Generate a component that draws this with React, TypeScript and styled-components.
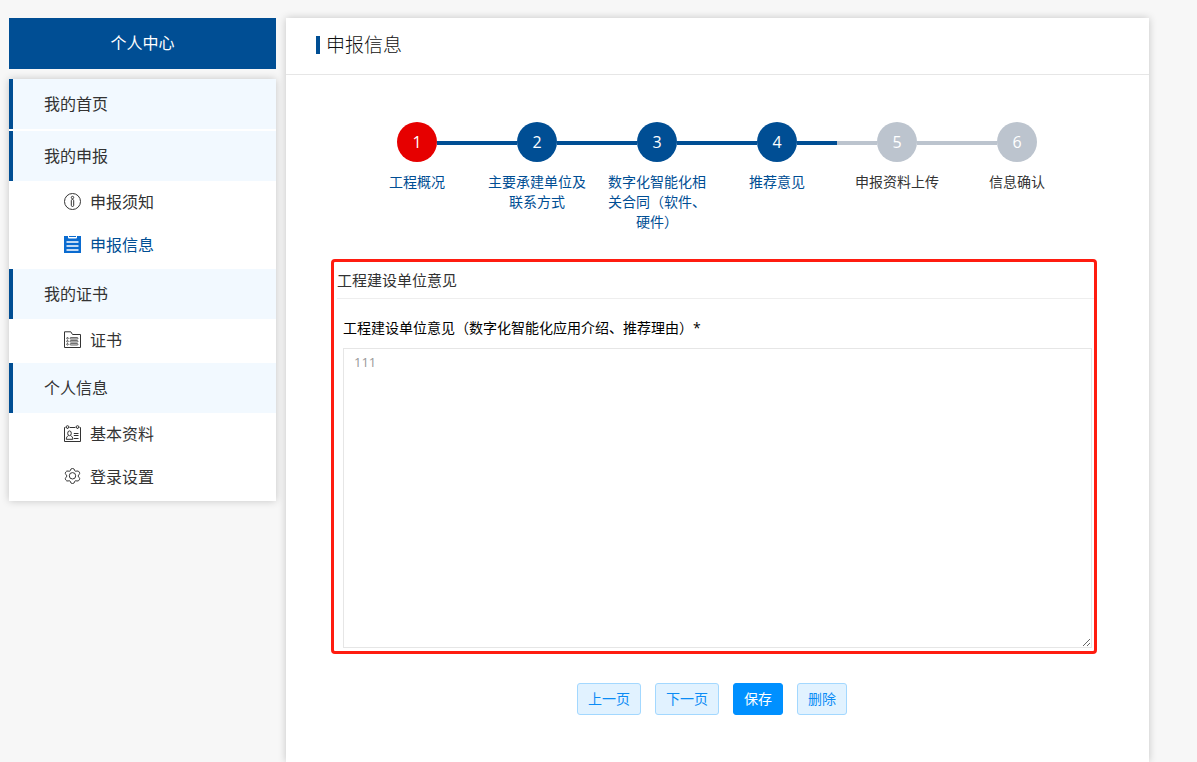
import React from "react";
import styled, { createGlobalStyle, css } from "styled-components";

const GlobalStyle = createGlobalStyle`
  *, *::before, *::after { box-sizing: border-box; }
  body {
    margin: 0;
    background: #f7f7f7;
    color: #333;
    font-family: "Open Sans", "Noto Sans CJK SC", sans-serif;
    font-size: 14px;
    line-height: 20px;
  }
  h1, h2, p, ul, ol { margin: 0; padding: 0; font-weight: inherit; }
  ul, ol { list-style: none; }
  a { color: inherit; text-decoration: none; }
`;

const blue = "#004e94";

const Page = styled.div`
  display: flex;
  align-items: flex-start;
  gap: 10px;
  min-height: 100vh;
  padding: 18px 48px 0 9px;
`;

const Sidebar = styled.aside`
  flex: 0 0 267px;
  display: flex;
  flex-direction: column;
  gap: 10px;
`;

const SidebarTitle = styled.h2`
  background: ${blue};
  color: #fff;
  font-size: 16px;
  line-height: 51px;
  text-align: center;
`;

const Menu = styled.nav`
  background: #fff;
  box-shadow: 0 0 8px rgba(0, 0, 0, 0.2);
`;

const SectionLink = styled.a<{ $spaced?: boolean }>`
  display: block;
  padding-left: 31px;
  border-left: 4px solid ${blue};
  background: #f2f9ff;
  font-size: 16px;
  line-height: 50px;
  margin-bottom: ${(p) => (p.$spaced ? "2px" : "0")};
`;

const SubList = styled.ul<{ $single?: boolean }>`
  display: flex;
  flex-direction: column;
  padding-bottom: ${(p) => (p.$single ? "1px" : "2px")};
`;

const SubLink = styled.a<{ $active?: boolean }>`
  display: flex;
  align-items: center;
  gap: 8px;
  height: 43px;
  padding: 0 0 2px 55px;
  font-size: 16px;
  color: ${(p) => (p.$active ? blue : "#333")};

  svg { flex: none; }
`;

const Main = styled.main`
  flex: 1;
  min-width: 0;
  align-self: stretch;
  background: #fff;
  box-shadow: 0 0 8px rgba(0, 0, 0, 0.2);
`;

const MainHeader = styled.header`
  display: flex;
  align-items: center;
  gap: 6px;
  height: 57px;
  padding: 0 30px 2px;
  border-bottom: 1px solid #e6e6e6;

  &::before {
    content: "";
    width: 4px;
    height: 18px;
    background: ${blue};
  }
`;

const PageTitle = styled.h1`
  color: #111;
  font-size: 19px;
  font-weight: 300;
  line-height: 28px;
`;

const Steps = styled.ol`
  display: flex;
  justify-content: center;
  min-height: 108px;
  margin: 47px 1px 27px 0;
`;

type StepState = "first" | "done" | "current" | "todo";

const grey = "#bcc4ce";

const Step = styled.li<{ $state: StepState }>`
  flex: 0 0 120px;
  display: flex;
  flex-direction: column;
  gap: 10px;
  color: ${(p) => (p.$state === "todo" ? "#333" : blue)};
`;

const StepTrack = styled.div<{ $state: StepState }>`
  display: flex;
  align-items: center;

  &::before, &::after {
    content: "";
    flex: 1;
    height: 4px;
    margin-top: 2px;
    background: ${(p) => (p.$state === "todo" ? grey : blue)};
  }
  ${Step}:first-child &::before,
  ${Step}:last-child &::after { background: none; }
`;

const StepDot = styled.span<{ $state: StepState }>`
  width: 40px;
  border-radius: 50%;
  background: ${(p) =>
    p.$state === "first" ? "#e60000" : p.$state === "todo" ? grey : blue};
  color: #fff;
  font-size: 16px;
  line-height: 40px;
  text-align: center;
`;

const StepLabel = styled.span`
  padding: 0 10px;
  text-align: center;
`;

const Form = styled.form`
  margin: 0 52px 0 45px;
`;

const Section = styled.section`
  padding: 0 0 3px 3px;
  border: 3px solid #ff1c10;
  border-radius: 4px;
`;

const SectionTitle = styled.h2`
  border-bottom: 1px solid #eee;
  font-size: 15px;
  line-height: 36px;
`;

const Field = styled.div`
  display: flex;
  flex-direction: column;
  gap: 10px;
  padding: 19px 2px 0 6px;
`;

const FieldLabel = styled.label`
  color: #000;
`;

const TextArea = styled.textarea`
  display: block;
  width: 100%;
  height: 300px;
  padding: 3px 10px;
  border: 1px solid #e6e6e6;
  border-radius: 0;
  outline: none;
  background: #fff;
  color: #999;
  font: inherit;
  font-size: 13px;
`;

const Actions = styled.div`
  display: flex;
  justify-content: center;
  gap: 14px;
  padding: 29px 4px 47px 0;
`;

const Button = styled.button<{ $primary?: boolean }>`
  height: 32px;
  padding: 0 10px;
  border: 1px solid #a3d8ff;
  border-radius: 3px;
  background: #e1f2ff;
  color: #0b8cf5;
  font: inherit;
  cursor: pointer;
  ${(p) =>
    p.$primary &&
    css`
      border-color: #0090ff;
      background: #0090ff;
      color: #fff;
    `}
`;

const Icon = ({ children }: { children: React.ReactNode }) => (
  <svg
    width="18"
    height="18"
    viewBox="0 0 18 18"
    fill="none"
    stroke="#333"
    strokeWidth="1"
    aria-hidden="true"
  >
    {children}
  </svg>
);

const NoticeIcon = () => (
  <Icon>
    <circle cx="8.5" cy="8.5" r="8" />
    <circle cx="8.5" cy="4.5" r="1.2" />
    <rect x="7.3" y="6.5" width="2.4" height="7" rx="1.2" />
  </Icon>
);

const ClipboardIcon = () => (
  <Icon>
    <path d="M0 0h4v1.500q0 1 1 1h7q1 0 1-1V0h4v17H0z" fill="#0a6bd0" stroke="none" />
    <path d="M5 0h7v1H5z" fill="#0a6bd0" stroke="none" />
    <path d="M2.500 6h12M2.500 10h12M2.500 14h12" stroke="#fff" strokeWidth="1.300" />
  </Icon>
);

const FolderIcon = () => (
  <Icon>
    <path d="M.5 16.500V.8h6.300l1.700 2.700h8v13z" />
    <g strokeWidth=".8">
      <circle cx="3.500" cy="7.300" r=".8" />
      <circle cx="3.500" cy="10.300" r=".8" />
      <circle cx="3.500" cy="13.300" r=".8" />
      <rect x="6" y="6.600" width="8" height="1.400" rx=".7" />
      <rect x="6" y="9.600" width="8" height="1.400" rx=".7" />
      <rect x="6" y="12.600" width="8" height="1.400" rx=".7" />
    </g>
  </Icon>
);

const ProfileIcon = () => (
  <Icon>
    <path d="M1.500 2.500h-1v14h16v-14h-1M5.500 2.500h6" />
    <path d="M2 1.500q1.500-1.600 3 0L3.500 4zM12 1.500q1.500-1.600 3 0L13.500 4z" />
    <ellipse cx="5.500" cy="8.300" rx="1.800" ry="2.400" />
    <path d="M4.500 10.600C3 11.300 2.300 12.500 2.300 14.300h6.500c0-1.800-.7-3-2.200-3.700" />
    <path d="M9.800 8.500h4.700M9.800 10.500h4.700M9.800 13.500h4.700" />
  </Icon>
);

const GearIcon = () => (
  <Icon>
    <path d="M6.500 2Q6.700.5 8.500.5t2 1.500l.3.800q.5.600 1.300.4l.9-.2q1.600-.2 2.300 1.100.9 1.500-.3 2.500l-.5.500q-.5.900 0 1.800l.5.500q1.200 1 .3 2.500-.7 1.300-2.300 1.100l-.9-.2q-.8-.2-1.300.4l-.3.800q-.2 1.500-2 1.500t-2-1.500l-.3-.800q-.5-.6-1.300-.4l-.9.2q-1.600.2-2.300-1.100-.9-1.500.3-2.500l.5-.5q.5-.9 0-1.800L2 6.600Q.8 5.600 1.700 4.100 2.400 2.800 4 3l.9.200q.8.200 1.300-.4z" />
    <circle cx="8.500" cy="7.800" r="3.200" />
  </Icon>
);

const steps: { label: string; state: StepState }[] = [
  { label: "工程概况", state: "first" },
  { label: "主要承建单位及联系方式", state: "done" },
  { label: "数字化智能化相关合同（软件、硬件）", state: "done" },
  { label: "推荐意见", state: "current" },
  { label: "申报资料上传", state: "todo" },
  { label: "信息确认", state: "todo" },
];

export default function App() {
  return (
    <>
      <GlobalStyle />
      <Page>
        <Sidebar>
          <SidebarTitle>个人中心</SidebarTitle>
          <Menu>
            <SectionLink href="#home" $spaced>我的首页</SectionLink>
            <SectionLink href="#declare">我的申报</SectionLink>
            <SubList>
              <li><SubLink href="#notice"><NoticeIcon />申报须知</SubLink></li>
              <li><SubLink href="#info" $active><ClipboardIcon />申报信息</SubLink></li>
            </SubList>
            <SectionLink href="#certificates">我的证书</SectionLink>
            <SubList $single>
              <li><SubLink href="#certificate"><FolderIcon />证书</SubLink></li>
            </SubList>
            <SectionLink href="#personal">个人信息</SectionLink>
            <SubList>
              <li><SubLink href="#profile"><ProfileIcon />基本资料</SubLink></li>
              <li><SubLink href="#login"><GearIcon />登录设置</SubLink></li>
            </SubList>
          </Menu>
        </Sidebar>
        <Main>
          <MainHeader>
            <PageTitle>申报信息</PageTitle>
          </MainHeader>
          <Steps>
            {steps.map((s, i) => (
              <Step key={s.label} $state={s.state}>
                <StepTrack $state={s.state}>
                  <StepDot $state={s.state}>{i + 1}</StepDot>
                </StepTrack>
                <StepLabel>{s.label}</StepLabel>
              </Step>
            ))}
          </Steps>
          <Form onSubmit={(e) => e.preventDefault()}>
            <Section>
              <SectionTitle>工程建设单位意见</SectionTitle>
              <Field>
                <FieldLabel htmlFor="opinion">
                  工程建设单位意见（数字化智能化应用介绍、推荐理由）*
                </FieldLabel>
                <TextArea id="opinion" defaultValue="111" />
              </Field>
            </Section>
            <Actions>
              <Button type="button">上一页</Button>
              <Button type="button">下一页</Button>
              <Button type="submit" $primary>保存</Button>
              <Button type="button">删除</Button>
            </Actions>
          </Form>
        </Main>
      </Page>
    </>
  );
}
